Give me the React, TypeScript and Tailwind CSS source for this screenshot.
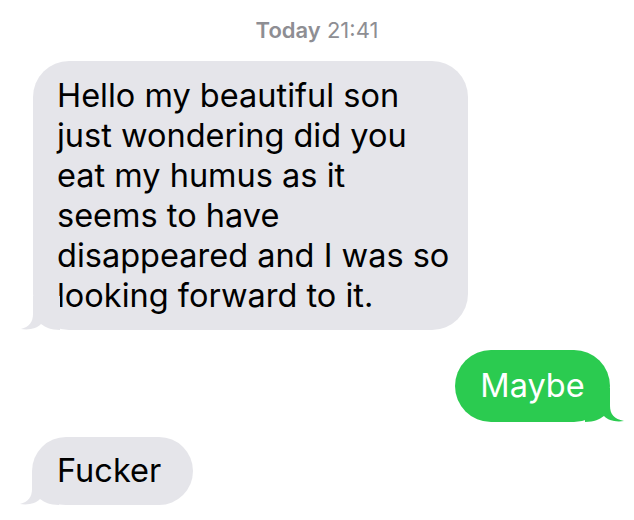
export default function App() {
  const font = { fontFamily: "Inter, 'Liberation Sans', sans-serif" };
  return (
    <div className="w-[634px] h-[520px] bg-white flex flex-col overflow-hidden" style={font}>
      <div className="pt-[16px] text-center text-[22px] leading-[28px] text-[#8e8e93]">
        <span className="font-semibold">Today</span> 21:41
      </div>

      <div className="relative mt-[17px] ml-[33px] w-[435px] rounded-[36px] bg-[#e5e5ea] pl-[24px] pt-[15px] pb-[14px] text-[32.5px] leading-[40px] text-black">
        <div>Hello my beautiful son</div>
        <div>just wondering did you</div>
        <div>eat my humus as it</div>
        <div>seems to have</div>
        <div>disappeared and I was so</div>
        <div>looking forward to it.</div>
        <svg className="absolute left-[-13px] bottom-0" width="40" height="34" viewBox="0 0 40 34">
          <path d="M13 0 L13 18 C13 26 9 31 1 33 C10 34.5 17 32 21 28 C25 31 31 34 40 34 L40 0 Z" fill="#e5e5ea" />
        </svg>
      </div>

      <div className="relative mt-[20px] ml-auto mr-[24px] w-[155px] rounded-[36px] bg-[#2bcb50] py-[16px] text-center text-[32.5px] leading-[40px] text-white">
        Maybe
        <svg className="absolute right-[-15px] bottom-0" width="40" height="34" viewBox="0 0 40 34">
          <path d="M25 0 L25 18 C25 26 29 31 39 33 C30 34.5 23 32 19 28 C15 31 9 34 0 34 L0 0 Z" fill="#2bcb50" />
        </svg>
      </div>

      <div className="relative mt-[15px] ml-[32px] w-[161px] rounded-[36px] bg-[#e5e5ea] pl-[25px] py-[14px] text-[32.5px] leading-[40px] text-black">
        Fucker
        <svg className="absolute left-[-13px] bottom-0" width="40" height="34" viewBox="0 0 40 34">
          <path d="M13 0 L13 18 C13 26 9 31 1 33 C10 34.5 17 32 21 28 C25 31 31 34 40 34 L40 0 Z" fill="#e5e5ea" />
        </svg>
      </div>
    </div>
  );
}
